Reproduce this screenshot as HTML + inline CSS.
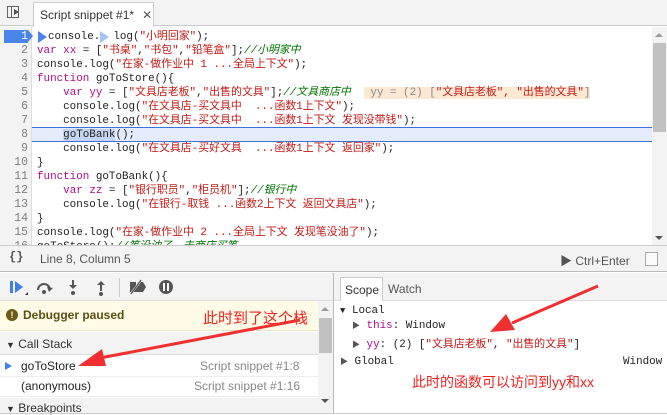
<!DOCTYPE html>
<html><head><meta charset="utf-8"><style>
*{margin:0;padding:0;box-sizing:border-box}
body{width:667px;height:414px;overflow:hidden;background:#fff;font-family:"Liberation Sans","Noto Sans CJK SC",sans-serif;font-size:12px;position:relative;color:#222}
.abs{position:absolute;white-space:nowrap}
.mono{font-family:"Liberation Mono","Noto Sans CJK SC",monospace;font-size:10.9px}
.ln{position:absolute;left:0;width:28px;height:14px;line-height:14px;text-align:right;color:#808080;font-family:"Liberation Mono",monospace;font-size:11.5px}
.cl{position:absolute;left:37px;white-space:pre;color:#222;height:14px;line-height:14px;overflow:visible}
.cl span{line-height:14px}
.k{color:#aa0d91}.s{color:#c41a16}.c{color:#007400;font-style:italic}.v{color:#1c00cf}
</style></head><body>
<!-- tab bar -->
<div class="abs" style="left:0;top:0;width:667px;height:26px;background:#f3f3f3;border-bottom:1px solid #ccc"></div>
<div class="abs" style="left:7px;top:6px;width:12px;height:12px;border:1px solid #666"></div>
<div class="abs" style="left:11px;top:6px;width:1px;height:12px;background:#666"></div>
<div class="abs" style="left:14px;top:9px;width:0;height:0;border-left:5px solid #555;border-top:3px solid transparent;border-bottom:3px solid transparent"></div>
<div class="abs" style="left:33px;top:2px;width:121px;height:25px;background:#fff;border:1px solid #ccc;border-bottom:none;padding:5px 0 0 6px;color:#333;font-size:12px;white-space:nowrap">Script snippet #1*<span style="margin-left:8px;color:#555">✕</span></div>
<!-- editor -->
<div class="abs" style="left:0;top:27px;width:32px;height:218px;background:#f3f3f3;border-right:1px solid #ddd"></div>
<div class="abs" style="left:32px;top:127px;width:620px;height:15px;background:#e4ebfb;border-top:1px solid #3a72d9;border-bottom:1px solid #3a72d9"></div>
<div class="abs" style="left:4px;top:30px;width:24px;height:13px;background:#4a86e8"></div>
<div class="abs" style="left:28px;top:30px;width:0;height:0;border-left:5px solid #4a86e8;border-top:6.5px solid transparent;border-bottom:6.5px solid transparent"></div>
<div class="abs" style="left:38px;top:31px;width:0;height:0;border-left:9px solid #4a86e8;border-top:6px solid transparent;border-bottom:6px solid transparent"></div>
<div class="abs" style="left:100px;top:31px;width:0;height:0;border-left:9px solid #a8c4f4;border-top:6px solid transparent;border-bottom:6px solid transparent"></div>
<div style="position:absolute;left:0;top:30px;width:652px;height:215px;overflow:hidden">
<div class="ln" style="top:0;color:#fff">1</div>
<div class="ln" style="top:14px">2</div><div class="ln" style="top:28px">3</div><div class="ln" style="top:42px">4</div><div class="ln" style="top:56px">5</div><div class="ln" style="top:70px">6</div><div class="ln" style="top:84px">7</div><div class="ln" style="top:98px">8</div><div class="ln" style="top:112px">9</div><div class="ln" style="top:126px">10</div><div class="ln" style="top:140px">11</div><div class="ln" style="top:154px">12</div><div class="ln" style="top:168px">13</div><div class="ln" style="top:182px">14</div><div class="ln" style="top:196px">15</div><div class="ln" style="top:210px">16</div>
<div class="cl mono" style="top:0;left:48px">console.  log(<span class="s">"小明回家"</span>);</div>
<div class="cl mono" style="top:14px"><span class="k">var</span> <span class="k">xx</span> = [<span class="s">"书桌"</span>,<span class="s">"书包"</span>,<span class="s">"铅笔盒"</span>];<span class="c">//小明家中</span></div>
<div class="cl mono" style="top:28px">console.log(<span class="s">"在家-做作业中 1 ...全局上下文"</span>);</div>
<div class="cl mono" style="top:42px"><span class="k">function</span> goToStore(){</div>
<div class="cl mono" style="top:56px">    <span class="k">var</span> <span class="k">yy</span> = [<span class="s">"文具店老板"</span>,<span class="s">"出售的文具"</span>];<span class="c">//文具商店中</span>  <span style="background:#fde8d4;color:#888"> yy = (2) [<span class="s">"文具店老板", "出售的文具"</span>]</span></div>
<div class="cl mono" style="top:70px">    console.log(<span class="s">"在文具店-买文具中  ...函数1上下文"</span>);</div>
<div class="cl mono" style="top:84px">    console.log(<span class="s">"在文具店-买文具中  ...函数1上下文 发现没带钱"</span>);</div>
<div class="cl mono" style="top:98px">    <span style="background:#c4d6f2">goToBank</span>();</div>
<div class="cl mono" style="top:112px">    console.log(<span class="s">"在文具店-买好文具  ...函数1上下文 返回家"</span>);</div>
<div class="cl mono" style="top:126px">}</div>
<div class="cl mono" style="top:140px"><span class="k">function</span> goToBank(){</div>
<div class="cl mono" style="top:154px">    <span class="k">var</span> <span class="k">zz</span> = [<span class="s">"银行职员"</span>,<span class="s">"柜员机"</span>];<span class="c">//银行中</span></div>
<div class="cl mono" style="top:168px">    console.log(<span class="s">"在银行-取钱 ...函数2上下文 返回文具店"</span>);</div>
<div class="cl mono" style="top:182px">}</div>
<div class="cl mono" style="top:196px">console.log(<span class="s">"在家-做作业中 2 ...全局上下文 发现笔没油了"</span>);</div>
<div class="cl mono" style="top:210px">goToStore();<span class="c">//笔没油了，去商店买笔</span></div>
</div>
<!-- scrollbar -->
<div class="abs" style="left:652px;top:27px;width:15px;height:218px;background:#f3f3f3"></div>
<div class="abs" style="left:653px;top:43px;width:13px;height:89px;background:#c1c1c1"></div>
<div class="abs" style="left:655px;top:33px;border-bottom:4px solid #999;border-left:4px solid transparent;border-right:4px solid transparent"></div>
<div class="abs" style="left:655px;top:236px;border-top:4px solid #555;border-left:4px solid transparent;border-right:4px solid transparent"></div>
<!-- status bar -->
<div class="abs" style="left:0;top:245px;width:667px;height:27px;background:#f3f3f3;border-top:1px solid #ccc;border-bottom:1px solid #bbb"></div>
<div class="abs" style="left:9px;top:250px;font-family:'Liberation Mono',monospace;font-size:12px;color:#555;font-weight:bold">{}</div>
<div class="abs" style="left:40px;top:252px;color:#555;font-size:12px">Line 8, Column 5</div>
<div class="abs" style="left:560px;top:252px;color:#555;font-size:12px">▶ Ctrl+Enter</div>
<div class="abs" style="left:645px;top:252px;width:13px;height:14px;border:1px solid #aaa;background:#fafafa"></div>
<!-- left bottom pane -->
<div class="abs" style="left:0;top:273px;width:333px;height:28px;background:#f3f3f3;border-bottom:1px solid #ddd"></div>
<svg class="abs" style="left:0;top:273px" width="190" height="28">
<rect x="10" y="8" width="3" height="12" fill="#3f7fe8"/><path d="M15 8 L23 14 L15 20Z" fill="#3f7fe8"/><path d="M25 22 L28 22 L28 19Z" fill="#333"/>
<path d="M38 17 A6 6 0 0 1 50 17" stroke="#555" stroke-width="2" fill="none"/><path d="M47 14 L53 15 L49 19Z" fill="#555"/><circle cx="44" cy="19" r="2" fill="#555"/>
<rect x="72" y="7" width="2" height="7" fill="#555"/><path d="M69 12 L77 12 L73 16Z" fill="#555"/><circle cx="73" cy="20" r="2" fill="#555"/>
<rect x="100" y="11" width="2" height="7" fill="#555"/><path d="M97 12 L105 12 L101 8Z" fill="#555"/><circle cx="101" cy="21" r="2" fill="#555"/>
<rect x="119" y="5" width="1" height="19" fill="#ccc"/>
<path d="M130 9 L136 9 L136 19 L130 19Z M138 9 L143 9 L146 14 L143 19 L134 19" fill="#555"/><path d="M130 22 L142 6" stroke="#f3f3f3" stroke-width="2"/><path d="M131 21 L141 7" stroke="#555" stroke-width="1.3"/>
<circle cx="166" cy="14" r="7" fill="#555"/><rect x="163" y="10" width="2" height="8" fill="#fff"/><rect x="167" y="10" width="2" height="8" fill="#fff"/>
</svg>
<div class="abs" style="left:0;top:301px;width:318px;height:30px;background:#fffbe6;border-bottom:1px solid #e8e2c4"></div>
<div class="abs" style="left:6px;top:309px;width:12px;height:12px;border-radius:50%;background:#6b5e14;color:#fff;font-size:9px;font-weight:bold;text-align:center;line-height:12px">!</div>
<div class="abs" style="left:23px;top:308px;font-weight:bold;color:#5c4f12;font-size:12px">Debugger paused</div>
<div class="abs" style="left:203px;top:307px;color:#ee2222;font-size:15px">此时到了这个栈</div>
<div class="abs" style="left:0;top:332px;width:318px;height:23px;background:#f3f3f3;border-bottom:1px solid #ddd"></div>
<div class="abs" style="left:6px;top:337px;color:#333;font-size:12px"><span style="font-size:9px">▼</span> Call Stack</div>
<div class="abs" style="left:0;top:355px;width:318px;height:22px;background:#fff;border-bottom:1px solid #eee"></div>
<div class="abs" style="left:5px;top:362px;width:0;height:0;border-left:7px solid #3f7fe8;border-top:4px solid transparent;border-bottom:4px solid transparent"></div>
<div class="abs" style="left:21px;top:359px;color:#222;font-size:12px">goToStore</div>
<div class="abs" style="left:200px;top:359px;color:#888;font-size:12px">Script snippet #1:8</div>
<div class="abs" style="left:0;top:377px;width:318px;height:20px;border-bottom:1px solid #eee"></div>
<div class="abs" style="left:21px;top:379px;color:#222;font-size:12px">(anonymous)</div>
<div class="abs" style="left:194px;top:379px;color:#888;font-size:12px">Script snippet #1:16</div>
<div class="abs" style="left:0;top:398px;width:318px;height:16px;background:#f3f3f3"></div>
<div class="abs" style="left:6px;top:401px;color:#333;font-size:12px"><span style="font-size:9px">▼</span> Breakpoints</div>
<div class="abs" style="left:318px;top:301px;width:15px;height:113px;background:#f3f3f3"></div>
<div class="abs" style="left:319px;top:318px;width:13px;height:35px;background:#c1c1c1"></div>
<div class="abs" style="left:321px;top:307px;border-bottom:4px solid #999;border-left:4px solid transparent;border-right:4px solid transparent"></div>
<div class="abs" style="left:321px;top:399px;border-top:4px solid #555;border-left:4px solid transparent;border-right:4px solid transparent"></div>
<div class="abs" style="left:333px;top:273px;width:1px;height:141px;background:#bbb"></div>
<!-- right pane -->
<div class="abs" style="left:334px;top:273px;width:333px;height:28px;background:#f3f3f3;border-bottom:1px solid #ddd"></div>
<div class="abs" style="left:340px;top:277px;width:43px;height:24px;background:#fff;border:1px solid #ccc;border-bottom:none;padding:5px 0 0 4px;color:#333;font-size:12px">Scope</div>
<div class="abs" style="left:388px;top:282px;color:#555;font-size:12px">Watch</div>
<div class="abs mono" style="left:340px;top:305px;color:#222"><span style="font-size:9px">▼</span> Local</div>
<div class="abs mono" style="left:352px;top:320px;color:#222"><span style="font-size:8px;color:#555">▶</span> <span class="k">this</span>: Window</div>
<div class="abs mono" style="left:352px;top:335px;color:#222"><span style="font-size:8px;color:#555">▶</span> <span class="k">yy</span>: (2) [<span class="s">"文具店老板"</span>, <span class="s">"出售的文具"</span>]</div>
<div class="abs mono" style="left:340px;top:356px;color:#222"><span style="font-size:8px;color:#555">▶</span> Global</div>
<div class="abs mono" style="left:623px;top:356px;color:#222">Window</div>
<div class="abs" style="left:412px;top:372px;color:#ee2222;font-size:14px">此时的函数可以访问到yy和xx</div>
<div class="abs" style="left:0;top:413px;width:667px;height:1px;background:#ccc"></div>
<!-- arrows -->
<svg class="abs" style="left:0;top:0" width="667" height="414">
<path d="M300 320 L100 358" stroke="#f03030" stroke-width="3"/>
<path d="M78 366 L102 349 L106 366Z" fill="#f03030"/>
<path d="M598 286 L512 323" stroke="#f03030" stroke-width="3"/>
<path d="M490 332 L506 314 L515 330Z" fill="#f03030"/>
</svg>
</body></html>
